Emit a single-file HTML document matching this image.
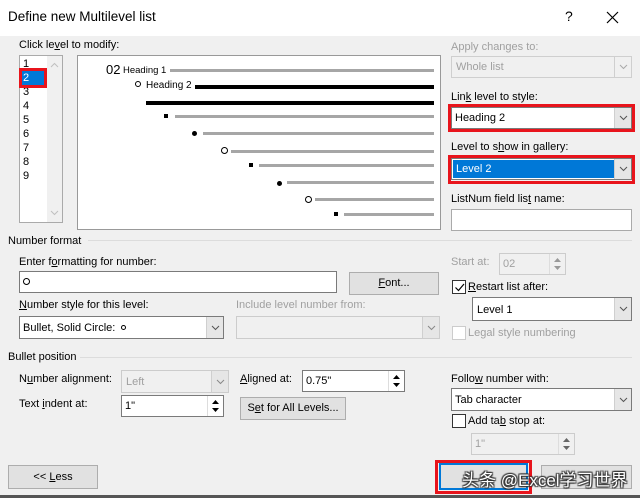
<!DOCTYPE html>
<html><head><meta charset="utf-8"><style>
*{box-sizing:border-box;margin:0;padding:0}
body{width:640px;height:498px;background:#f0f0f0;font-family:"Liberation Sans","Noto Sans CJK SC",sans-serif;font-size:11px;color:#000;position:relative;overflow:hidden}
.a{position:absolute;white-space:nowrap}
.g{color:#a0a0a0}
.box{position:absolute;background:#fff;border:1px solid #7a7a7a}
.dis{background:#f0f0f0;border-color:#cfcfcf}
.dd{position:absolute;top:0;right:0;bottom:0;width:17px;background:#e6e6e6;border-left:1px solid #cfcfcf}
.dd svg{position:absolute;left:4px;top:50%;margin-top:-3px}
.btn{position:absolute;background:#e1e1e1;border:1px solid #adadad;text-align:center}
.spin{position:absolute;top:0;right:0;bottom:0;width:16px;background:#fff;border-left:1px solid #ddd}
.red{position:absolute;border:3px solid #e8141c}
.bar{position:absolute;height:4px;background:#a6a6a6}
.bk{background:#000}
.sec{position:absolute;height:1px;background:#dcdcdc}
.cb{position:absolute;width:14px;height:14px;background:#fff;border:1px solid #333}
</style></head><body>
<div class="a" style="left:0;top:0;width:640px;height:36px;background:#fff"></div>
<div class="a" style="left:8px;top:9px;font-size:13.5px">Define new Multilevel list</div>
<div class="a" style="left:565px;top:8px;font-size:14px">?</div>
<svg class="a" style="left:606px;top:11px" width="13" height="13"><path d="M1 1L12 12M12 1L1 12" stroke="#000" stroke-width="1.2"/></svg>

<div class="a" style="left:19px;top:39px">Click le<u>v</u>el to modify:</div>
<div class="box" style="left:19px;top:55px;width:44px;height:168px;border-color:#aaa"></div>
<div class="a" style="left:47px;top:56px;width:15px;height:166px;background:#f0f0f0"></div>
<svg class="a" style="left:50px;top:62px" width="9" height="6"><path d="M1 5L4.5 1.5L8 5" stroke="#c0c0c0" fill="none"/></svg>
<svg class="a" style="left:50px;top:210px" width="9" height="6"><path d="M1 1L4.5 4.5L8 1" stroke="#c0c0c0" fill="none"/></svg>
<div class="a" style="left:21px;top:71px;width:24px;height:14px;background:#0078d7"></div>
<div class="a" style="left:23px;top:57px;line-height:14px">1<br><span style="color:#fff">2</span><br>3<br>4<br>5<br>6<br>7<br>8<br>9</div>
<div class="red" style="left:19px;top:68px;width:28px;height:20px"></div>

<div class="box" style="left:77px;top:55px;width:364px;height:175px;border-color:#999"></div>
<div class="a" style="left:106px;top:62px;font-size:13px">02</div>
<div class="a" style="left:123px;top:65px;font-size:9.5px">Heading 1</div>
<div class="bar" style="left:170px;top:69px;width:264px;height:3px"></div>
<div class="a" style="left:135px;top:81px;width:6px;height:6px;border:1px solid #000;border-radius:50%"></div>
<div class="a" style="left:146px;top:80px;font-size:10px">Heading 2</div>
<div class="bar bk" style="left:195px;top:85px;width:239px"></div>
<div class="bar bk" style="left:146px;top:101px;width:288px"></div>
<div class="a" style="left:164px;top:114px;width:4px;height:4px;background:#000"></div>
<div class="bar" style="left:175px;top:115px;width:259px;height:3px"></div>
<div class="a" style="left:192px;top:131px;width:5px;height:5px;background:#000;border-radius:50%"></div>
<div class="bar" style="left:203px;top:132px;width:231px;height:3px"></div>
<div class="a" style="left:221px;top:147px;width:7px;height:7px;border:1px solid #000;border-radius:50%"></div>
<div class="bar" style="left:231px;top:150px;width:203px;height:3px"></div>
<div class="a" style="left:249px;top:163px;width:4px;height:4px;background:#000"></div>
<div class="bar" style="left:259px;top:164px;width:175px;height:3px"></div>
<div class="a" style="left:277px;top:181px;width:5px;height:5px;background:#000;border-radius:50%"></div>
<div class="bar" style="left:287px;top:181px;width:147px;height:3px"></div>
<div class="a" style="left:305px;top:196px;width:7px;height:7px;border:1px solid #000;border-radius:50%"></div>
<div class="bar" style="left:315px;top:198px;width:119px;height:3px"></div>
<div class="a" style="left:334px;top:212px;width:4px;height:4px;background:#000"></div>
<div class="bar" style="left:344px;top:213px;width:90px;height:3px"></div>

<div class="a g" style="left:451px;top:41px">Apply changes to:</div>
<div class="box dis" style="left:451px;top:56px;width:181px;height:22px"><span class="a g" style="left:4px;top:4px">Whole list</span><div class="dd" style="background:#f0f0f0"><svg width="9" height="6"><path d="M1 1L4.5 4.5L8 1" stroke="#aaa" fill="none"/></svg></div></div>
<div class="a" style="left:451px;top:91px">Lin<u>k</u> level to style:</div>
<div class="box" style="left:451px;top:107px;width:181px;height:22px"><span class="a" style="left:3px;top:4px">Heading 2</span><div class="dd"><svg width="9" height="6"><path d="M1 1L4.5 4.5L8 1" stroke="#555" fill="none"/></svg></div></div>
<div class="red" style="left:448px;top:104px;width:187px;height:28px"></div>
<div class="a" style="left:451px;top:141px">Level to s<u>h</u>ow in gallery:</div>
<div class="box" style="left:451px;top:158px;width:181px;height:22px"><div class="a" style="left:1px;top:1px;width:161px;height:18px;background:#0078d7"></div><span class="a" style="left:4px;top:4px;color:#fff">Level 2</span><div class="dd"><svg width="9" height="6"><path d="M1 1L4.5 4.5L8 1" stroke="#555" fill="none"/></svg></div></div>
<div class="red" style="left:448px;top:155px;width:187px;height:29px"></div>
<div class="a" style="left:451px;top:193px">ListNum field lis<u>t</u> name:</div>
<div class="box" style="left:451px;top:209px;width:181px;height:22px;border-color:#aaa"></div>

<div class="a" style="left:8px;top:235px">Number format</div>
<div class="sec" style="left:88px;top:240px;width:544px"></div>
<div class="a" style="left:19px;top:256px">Enter f<u>o</u>rmatting for number:</div>
<div class="box" style="left:19px;top:271px;width:318px;height:22px"><div class="a" style="left:3px;top:6px;width:7px;height:7px;border:1px solid #000;border-radius:50%"></div></div>
<div class="btn" style="left:349px;top:272px;width:90px;height:23px;line-height:21px"><u>F</u>ont...</div>
<div class="a g" style="left:451px;top:256px">Start at:</div>
<div class="box dis" style="left:499px;top:253px;width:67px;height:22px;border-color:#ccc"><span class="a g" style="left:3px;top:4px">02</span><div class="spin" style="background:#f0f0f0"><svg class="a" style="left:3px;top:3px" width="9" height="14"><path d="M1 5L4.5 1L8 5Z M1 9L4.5 13L8 9Z" fill="#999"/></svg></div></div>
<div class="cb" style="left:452px;top:280px"><svg class="a" style="left:1px;top:1px" width="11" height="11"><path d="M1.5 5.5L4.5 8.5L10 2" stroke="#000" fill="none" stroke-width="1.2"/></svg></div>
<div class="a" style="left:468px;top:281px"><u>R</u>estart list after:</div>
<div class="box" style="left:472px;top:297px;width:160px;height:24px"><span class="a" style="left:4px;top:6px">Level 1</span><div class="dd"><svg width="9" height="6"><path d="M1 1L4.5 4.5L8 1" stroke="#555" fill="none"/></svg></div></div>
<div class="cb" style="left:452px;top:326px;border-color:#ccc"></div>
<div class="a g" style="left:468px;top:327px">Legal style numbering</div>
<div class="a" style="left:19px;top:299px"><u>N</u>umber style for this level:</div>
<div class="box" style="left:19px;top:316px;width:205px;height:23px"><span class="a" style="left:3px;top:5px">Bullet, Solid Circle: &nbsp;<span style="display:inline-block;width:5px;height:5px;border:1px solid #000;border-radius:50%;vertical-align:1px"></span></span><div class="dd"><svg width="9" height="6"><path d="M1 1L4.5 4.5L8 1" stroke="#555" fill="none"/></svg></div></div>
<div class="a g" style="left:236px;top:299px">Include level number from:</div>
<div class="box dis" style="left:236px;top:316px;width:204px;height:23px;border-color:#ccc"><div class="dd"><svg width="9" height="6"><path d="M1 1L4.5 4.5L8 1" stroke="#888" fill="none"/></svg></div></div>

<div class="a" style="left:8px;top:351px">Bullet position</div>
<div class="sec" style="left:80px;top:357px;width:552px"></div>
<div class="a" style="left:19px;top:373px">N<u>u</u>mber alignment:</div>
<div class="box dis" style="left:121px;top:370px;width:108px;height:23px;border-color:#ccc"><span class="a g" style="left:4px;top:5px">Left</span><div class="dd"><svg width="9" height="6"><path d="M1 1L4.5 4.5L8 1" stroke="#888" fill="none"/></svg></div></div>
<div class="a" style="left:240px;top:373px"><u>A</u>ligned at:</div>
<div class="box" style="left:302px;top:370px;width:103px;height:22px"><span class="a" style="left:3px;top:4px">0.75"</span><div class="spin"><svg class="a" style="left:3px;top:3px" width="9" height="14"><path d="M1 5L4.5 1L8 5Z M1 9L4.5 13L8 9Z" fill="#000"/></svg></div></div>
<div class="a" style="left:19px;top:398px">Text <u>i</u>ndent at:</div>
<div class="box" style="left:121px;top:395px;width:103px;height:22px"><span class="a" style="left:3px;top:4px">1"</span><div class="spin"><svg class="a" style="left:3px;top:3px" width="9" height="14"><path d="M1 5L4.5 1L8 5Z M1 9L4.5 13L8 9Z" fill="#000"/></svg></div></div>
<div class="btn" style="left:240px;top:397px;width:106px;height:23px;line-height:21px">S<u>e</u>t for All Levels...</div>
<div class="a" style="left:451px;top:373px">Follo<u>w</u> number with:</div>
<div class="box" style="left:451px;top:388px;width:181px;height:23px"><span class="a" style="left:3px;top:5px">Tab character</span><div class="dd"><svg width="9" height="6"><path d="M1 1L4.5 4.5L8 1" stroke="#555" fill="none"/></svg></div></div>
<div class="cb" style="left:452px;top:414px"></div>
<div class="a" style="left:468px;top:415px">Add ta<u>b</u> stop at:</div>
<div class="box dis" style="left:471px;top:433px;width:104px;height:22px;border-color:#ccc"><span class="a g" style="left:3px;top:4px">1"</span><div class="spin" style="background:#f0f0f0"><svg class="a" style="left:3px;top:3px" width="9" height="14"><path d="M1 5L4.5 1L8 5Z M1 9L4.5 13L8 9Z" fill="#666"/></svg></div></div>

<div class="btn" style="left:8px;top:465px;width:90px;height:24px;line-height:22px">&lt;&lt; <u>L</u>ess</div>
<div class="btn" style="left:439px;top:463px;width:89px;height:27px;border:2px solid #0078d7"></div>
<div class="red" style="left:435px;top:460px;width:97px;height:34px"></div>
<div class="btn" style="left:541px;top:465px;width:91px;height:24px"></div>
<div class="a" style="left:0;top:495px;width:640px;height:3px;background:#555"></div>
<div class="a" style="left:462px;top:466px;font-size:17px;color:#fff;text-shadow:0 0 1px #333,1px 1px 1px #333,-1px -1px 1px #333,1px -1px 1px #333,-1px 1px 1px #333">头条 @Excel学习世界</div>
</body></html>
